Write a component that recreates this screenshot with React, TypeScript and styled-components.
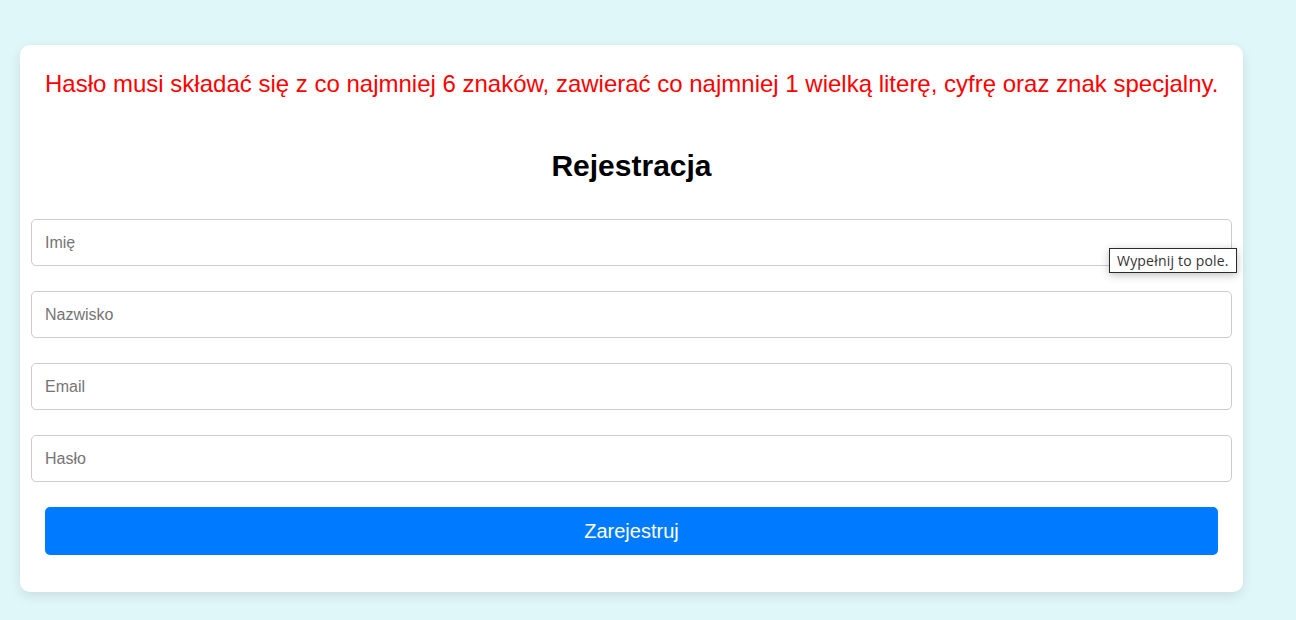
import React from "react";
import styled, { createGlobalStyle } from "styled-components";

const GlobalStyle = createGlobalStyle`
  html, body {
    margin: 0;
    padding: 0;
    background: #e0f7fa;
    font-family: "Liberation Sans", Arial, sans-serif;
  }
  body {
    padding: 45px 0 28px 20px;
  }
`;

const Card = styled.div`
  position: relative;
  width: 1223px;
  box-sizing: border-box;
  background: #ffffff;
  border-radius: 10px;
  box-shadow: 0 4px 12px rgba(0, 0, 0, 0.1);
  padding: 24px 25px 37px;
`;

const ErrorText = styled.p`
  margin: 0;
  color: #ff0000;
  font-size: 24px;
  line-height: 30px;
  text-align: center;
  white-space: nowrap;
`;

const Title = styled.h2`
  margin: 50px 0 36px;
  font-size: 30px;
  line-height: 34px;
  font-weight: bold;
  text-align: center;
  color: #000;
`;

const Form = styled.form`
  display: flex;
  flex-direction: column;
  gap: 25px;
`;

const Input = styled.input`
  display: block;
  box-sizing: border-box;
  width: calc(100% + 28px);
  margin: 0 -14px;
  height: 47px;
  padding: 0 13px;
  border: 1px solid #cccccc;
  border-radius: 5px;
  font-family: "Liberation Sans", Arial, sans-serif;
  font-size: 16px;
  color: #333;
  outline: none;
  &::placeholder {
    color: #757575;
  }
`;

const Button = styled.button`
  display: block;
  width: 100%;
  height: 48px;
  border: none;
  border-radius: 5px;
  background: #007bff;
  color: #ffffff;
  font-family: "Liberation Sans", Arial, sans-serif;
  font-size: 20px;
  cursor: pointer;
`;

const Tooltip = styled.div`
  position: absolute;
  left: 1089px;
  top: 203px;
  box-sizing: border-box;
  height: 25px;
  padding: 0 7px;
  display: flex;
  align-items: center;
  background: #ffffff;
  border: 1px solid #2b2b2b;
  box-shadow: 0 2px 8px rgba(0, 0, 0, 0.25);
  font-family: "Open Sans", "DejaVu Sans", sans-serif;
  font-size: 14px;
  letter-spacing: 0.2px;
  color: #333;
  white-space: nowrap;
`;

export default function App() {
  return (
    <>
      <GlobalStyle />
      <Card>
        <ErrorText>
          Hasło musi składać się z co najmniej 6 znaków, zawierać co najmniej 1 wielką literę, cyfrę oraz znak specjalny.
        </ErrorText>
        <Title>Rejestracja</Title>
        <Form onSubmit={(e) => e.preventDefault()}>
          <Input type="text" placeholder="Imię" />
          <Input type="text" placeholder="Nazwisko" />
          <Input type="email" placeholder="Email" />
          <Input type="password" placeholder="Hasło" />
          <Button type="submit">Zarejestruj</Button>
        </Form>
        <Tooltip>Wypełnij to pole.</Tooltip>
      </Card>
    </>
  );
}
